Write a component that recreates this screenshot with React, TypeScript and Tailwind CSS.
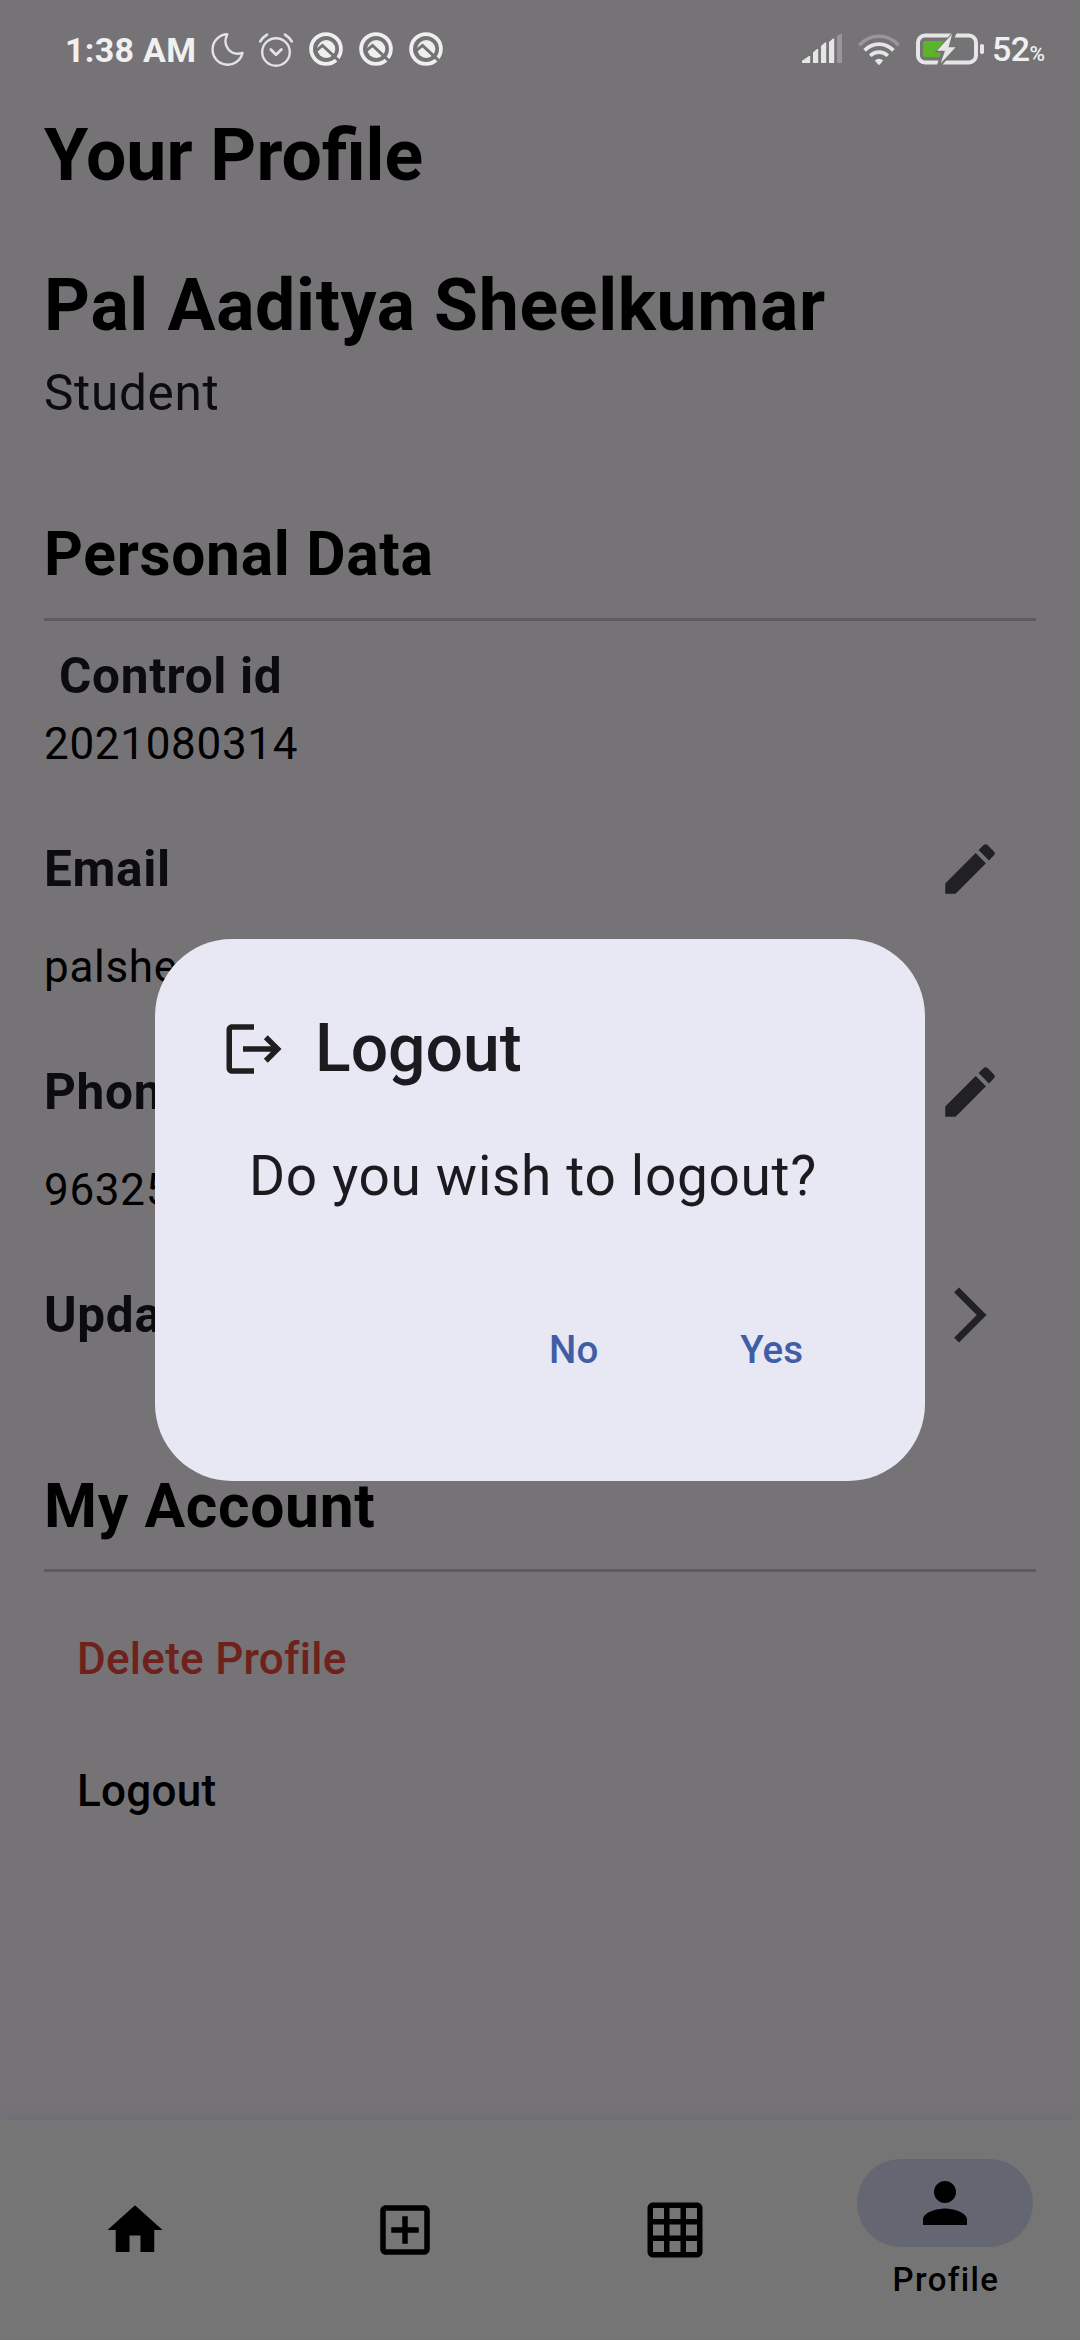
import React from "react";

function Icon({ d, className = "" }: { d: string; className?: string }) {
  return (
    <svg viewBox="0 0 24 24" className={`size-[66px] shrink-0 fill-current ${className}`}>
      <path d={d} />
    </svg>
  );
}

const ICONS = {
  edit: "M3 17.25V21h3.75L17.81 9.94l-3.75-3.75L3 17.25zM20.71 7.04c.39-.39.39-1.02 0-1.41l-2.34-2.34c-.39-.39-1.02-.39-1.41 0l-1.83 1.83 3.75 3.75 1.83-1.83z",
  chevron: "M6.23 20.23 8 22l10-10L8 2 6.23 3.77 14.46 12z",
  logout:
    "M17 7l-1.41 1.41L18.17 11H8v2h10.17l-2.58 2.58L17 17l5-5zM4 5h8V3H4c-1.1 0-2 .9-2 2v14c0 1.1.9 2 2 2h8v-2H4V5z",
  home: "M10 20v-6h4v6h5v-8h3L12 3 2 12h3v8z",
  add: "M19 3H5c-1.11 0-2 .9-2 2v14c0 1.1.89 2 2 2h14c1.1 0 2-.9 2-2V5c0-1.1-.9-2-2-2zm0 16H5V5h14v14zm-8-2h2v-4h4v-2h-4V7h-2v4H7v2h4z",
  grid: "M20 2H4c-1.1 0-2 .9-2 2v16c0 1.1.9 2 2 2h16c1.1 0 2-.9 2-2V4c0-1.1-.9-2-2-2zM8 20H4v-4h4v4zm0-6H4v-4h4v4zm0-6H4V4h4v4zm6 12h-4v-4h4v4zm0-6h-4v-4h4v4zm0-6h-4V4h4v4zm6 12h-4v-4h4v4zm0-6h-4v-4h4v4zm0-6h-4V4h4v4z",
  person:
    "M12 12c2.21 0 4-1.79 4-4s-1.79-4-4-4-4 1.79-4 4 1.79 4 4 4zm0 2c-2.67 0-8 1.34-8 4v2h16v-2c0-2.66-5.33-4-8-4z",
};

function Moon() {
  return (
    <svg viewBox="0 0 34 36" className="ml-[15px] h-[36px] w-[34px]" fill="none" stroke="#e3e3e3" strokeWidth="2.4" strokeLinejoin="round">
      <path d="M16.3 3.3A15.2 15.2 0 1 0 31.6 21.8C19.6 25.6 10.6 14.6 16.3 3.3z" />
    </svg>
  );
}

function Alarm() {
  return (
    <svg viewBox="0 0 36 36" className="mt-[2px] ml-[13px] h-[36px] w-[36px]" fill="none" stroke="#e3e3e3" strokeWidth="2.4" strokeLinecap="round" strokeLinejoin="round">
      <circle cx="18" cy="20" r="13.8" />
      <path d="M12.8 17.6l5.2 5.2 5.4-5.2" strokeWidth="2.8" />
      <path d="M2.3 9.4Q4.8 5.2 9 2.6M33.7 9.4Q31.2 5.2 27 2.6" strokeWidth="2.8" />
    </svg>
  );
}

function Badge({ className = "" }: { className?: string }) {
  return (
    <svg viewBox="-17 -17 34 34" className={`size-[34px] ${className}`} fill="none">
      <circle r="14.9" stroke="#efefef" strokeWidth="3.8" />
      <circle r="9" cx=".3" fill="#efefef" />
      <path d="M-10 1.8L-3.5 -3.6L16 14.6" stroke="#757376" strokeWidth="3" />
    </svg>
  );
}

function Signal() {
  return (
    <svg viewBox="0 0 41 30" className="h-[30px] w-[41px]" fill="#e6e6e6">
      <path d="M0 29v-2.2L7 22h1.200v7zM11 29V18.500l4-3.500h1.200v14zM19 29V12l4-3.500h1.200V29zM27 29V8l4-3.500h1.200V29z" />
      <path d="M35 29V2.500L38 0h2v29z" fill="#989698" />
    </svg>
  );
}

function Wifi() {
  return (
    <svg viewBox="0 0 42 32" className="mt-[2px] ml-[15px] h-[32px] w-[42px]" fill="none" strokeWidth="3.7">
      <path d="M1.300 11.300C12.500 -.800 29.500 -.800 40.700 11.300" stroke="#989698" />
      <path d="M6.600 16.400C14.800 8.100 27.200 8.100 35.400 16.400M12.200 21.800C17.200 16.900 24.800 16.900 29.800 21.800" stroke="#e6e6e6" />
      <path d="M16.800 26.600Q21 23 25.200 26.600L21.900 30.400Q21 31.200 20.100 30.400z" fill="#e6e6e6" />
    </svg>
  );
}

function Battery() {
  return (
    <svg viewBox="0 0 68 32" className="ml-[16px] h-[32px] w-[68px]">
      <rect x="2" y="2.500" width="58" height="27" rx="7" fill="none" stroke="#e6e6e6" strokeWidth="4" />
      <path d="M9 8h20l-9 11.500h6L24 24H10q-3 0-3-3V10q0-2 2-2z" fill="#5bb52b" />
      <path d="M37.500 -2L18.500 19.200h6.500L20.500 34h4L42 13.500h-7L41.500 -2z" fill="#757376" />
      <path d="M36.200 1L21 17.800h8L24.600 30.500L39.600 14.300H32.500z" fill="#e6e6e6" />
      <rect x="64" y="11" width="4" height="10" rx="1.800" fill="#e6e6e6" />
    </svg>
  );
}

function StatusBar() {
  return (
    <header className="flex h-[98px] items-center justify-between pr-[35px] pl-[65px] text-[34px] leading-[40px] text-[#f0f0f0]">
      <div className="flex items-center">
        <span className="pt-[2px] font-bold tracking-[0.3px]">1:38 AM</span>
        <Moon />
        <Alarm />
        <Badge className="ml-[15px]" />
        <Badge className="ml-[16px]" />
        <Badge className="ml-[16px]" />
      </div>
      <div className="flex items-center">
        <Signal />
        <Wifi />
        <Battery />
        <span className="ml-[8px] flex items-baseline pt-[4px] font-medium">
          <span className="tracking-[-0.6px]">52</span>
          <span className="text-[21px]">%</span>
        </span>
      </div>
    </header>
  );
}

function SectionTitle({ children }: { children: React.ReactNode }) {
  return <h2 className="text-[60.5px] leading-[71px] font-bold tracking-[0.6875px]">{children}</h2>;
}

function Field({ label, icon }: { label: string; icon: string }) {
  return (
    <div className="flex h-[132px] items-center justify-between pr-[33px]">
      <h3 className="text-[49.5px] leading-[58px] font-bold tracking-[0.6875px] text-[#0c0c0e]">{label}</h3>
      <Icon d={icon} className="text-[#212024]" />
    </div>
  );
}

function FieldValue({ children }: { children: React.ReactNode }) {
  return <p className="h-[91px] pt-[6px] text-[44px] leading-[52px] tracking-[0.6875px]">{children}</p>;
}

function NavItem({ d }: { d: string }) {
  return (
    <button className="flex h-full flex-1 items-center justify-center">
      <Icon d={d} />
    </button>
  );
}

export default function App() {
  return (
    <div className="relative flex h-[2340px] w-[1080px] flex-col overflow-hidden bg-[#757376] font-['Roboto',sans-serif] text-black">
      <StatusBar />
      <main className="flex-1 px-[44px] pt-[16px]">
        <h1 className="text-[71.5px] leading-[84px] font-bold">Your Profile</h1>
        <p className="mt-[66px] text-[71.5px] leading-[84px] font-bold tracking-[0.6875px]">Pal Aaditya Sheelkumar</p>
        <p className="mt-[16px] text-[49.5px] leading-[58px] tracking-[0.6875px] text-[#0c0c0e]">Student</p>

        <div className="mt-[97px]">
          <SectionTitle>Personal Data</SectionTitle>
          <div className="mt-[28px] h-[3px] bg-[#5d5d5f]" />
          <h3 className="mt-[26px] ml-[15px] text-[49.5px] leading-[58px] font-bold tracking-[0.6875px] text-[#0c0c0e]">
            Control id
          </h3>
          <p className="mt-[13px] text-[44px] leading-[52px] tracking-[0.6875px]">2021080314</p>
        </div>

        <div className="mt-[33px]">
          <Field label="Email" icon={ICONS.edit} />
          <FieldValue>palshe</FieldValue>
          <Field label="Phone" icon={ICONS.edit} />
          <FieldValue>96325</FieldValue>
          <Field label="Update" icon={ICONS.chevron} />
        </div>

        <div className="mt-[90px]">
          <SectionTitle>My Account</SectionTitle>
          <div className="mt-[27px] h-[3px] bg-[#5d5d5f]" />
          <div className="mt-[21px] flex flex-col items-start pl-[33px] text-[44px] leading-[52px] font-medium tracking-[0.275px]">
            <button className="h-[132px] text-[#6f211c]">Delete Profile</button>
            <button className="h-[132px]">Logout</button>
          </div>
        </div>
      </main>

      <nav className="flex h-[220px] shrink-0 items-center bg-[#757575] shadow-[0_-5px_9px_#6e6e7599]">
        <NavItem d={ICONS.home} />
        <NavItem d={ICONS.add} />
        <NavItem d={ICONS.grid} />
        <button className="flex h-full flex-1 flex-col items-center pt-[39px]">
          <span className="flex h-[88px] w-[176px] items-center justify-center rounded-full bg-[#646672]">
            <Icon d={ICONS.person} />
          </span>
          <span className="mt-[13px] ml-[2px] text-[33px] leading-[40px] font-medium tracking-[1.375px]">Profile</span>
        </button>
      </nav>

      <div role="dialog" className="absolute top-[939px] left-[155px] flex h-[542px] w-[770px] flex-col rounded-[77px] bg-[#e8e8f5] px-[66px] pt-[70px] text-[#1b1b1f]">
        <div className="flex items-center">
          <Icon d={ICONS.logout} className="text-[#1f1f1f]" />
          <h2 className="ml-[28px] text-[66px] leading-[80px] font-medium">Logout</h2>
        </div>
        <p className="mt-[54px] ml-[28px] text-[55px] leading-[66px] tracking-[0.6875px] whitespace-nowrap">Do you wish to logout?</p>
        <div className="mt-[75px] flex h-[132px] items-center justify-end pr-[56px] text-[38.5px] leading-[46px] font-medium text-[#415da6]">
          <button className="mr-[142px]">No</button>
          <button>Yes</button>
        </div>
      </div>
    </div>
  );
}
